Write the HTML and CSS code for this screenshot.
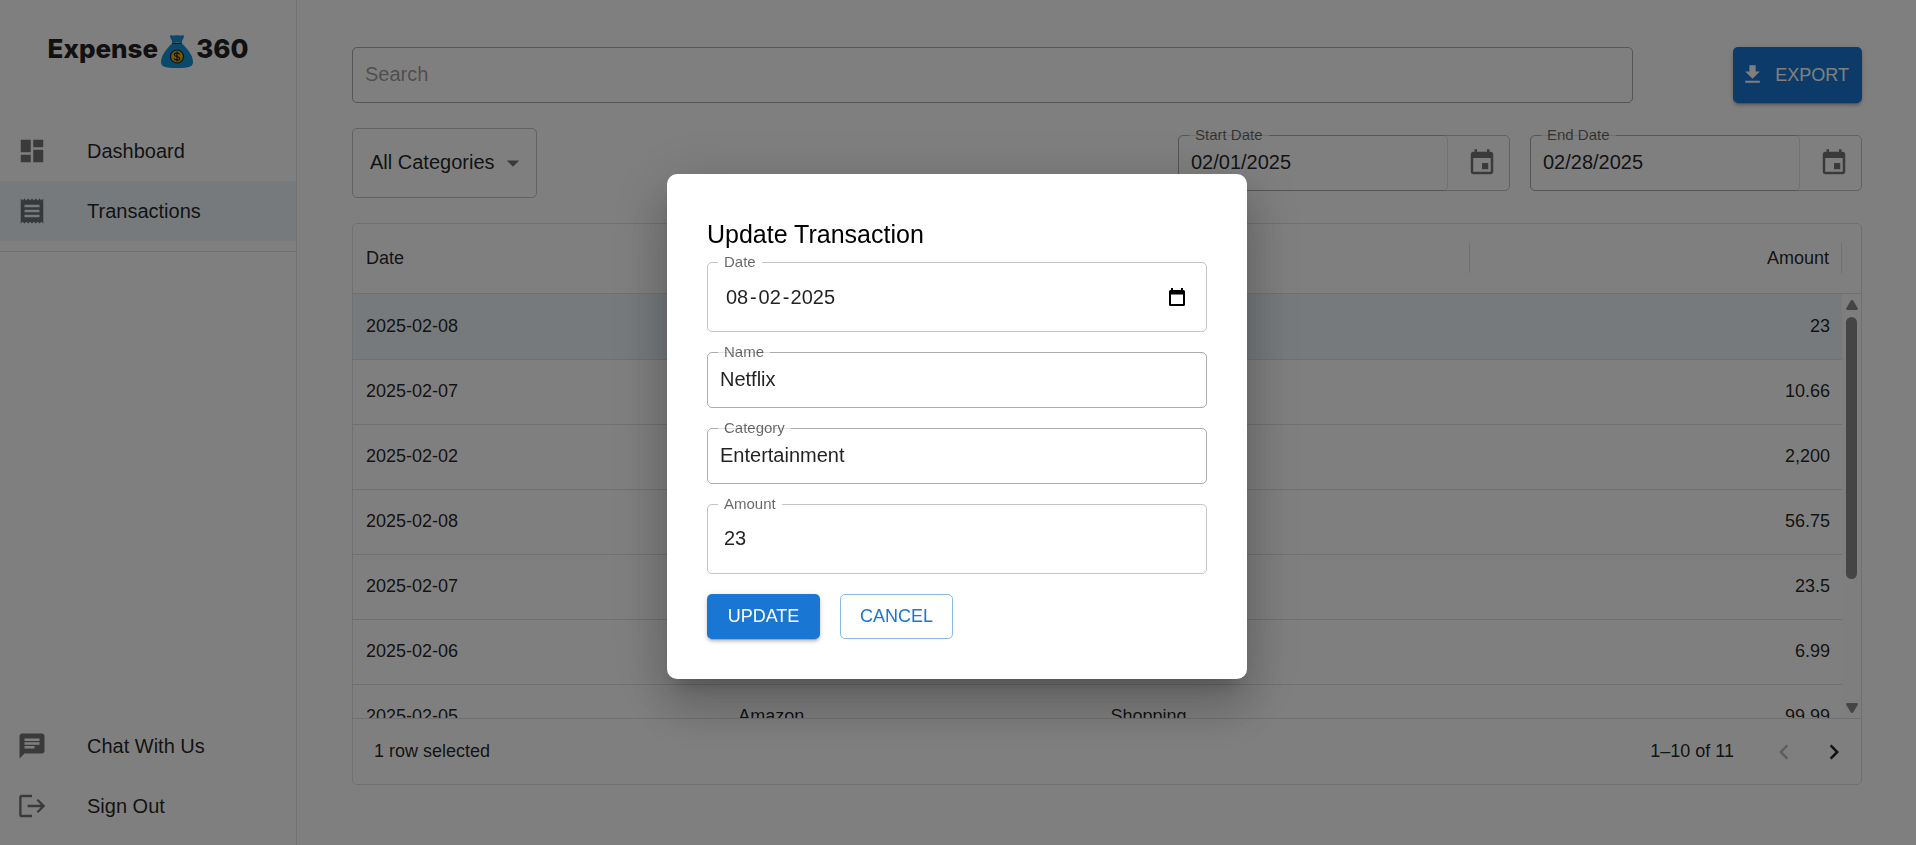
FILE: index.html
```html
<!DOCTYPE html>
<html lang="en">
<head>
<meta charset="utf-8">
<title>Expense360 - Transactions</title>
<link rel="stylesheet" href="styles.css">
</head>
<body>
<div class="app">
  <aside class="sidebar">
    <div class="logo">
      <span>Expense</span>
      <svg class="logo-bag" viewBox="0 0 32 33" aria-hidden="true">
        <path d="M9 1.2C9 .2 10.300 0 11.500.4c1.500.5 2.500-.2 4.500-.2s3 .7 4.500.2C21.800 0 23.200.2 23 1.400c-.4 2.300-2.200 3.600-2.200 6.100h-9.600C11.200 5 9.200 3.600 9 1.200z" fill="#1193d8"/>
        <path d="M11 8.500h10c4.500 4.500 11 11.500 11 18.500 0 4.500-3.500 6-16 6S0 31.500 0 27C0 20 6.500 13 11 8.500z" fill="#1193d8"/>
        <path d="M11 8q5 1 10 0" fill="none" stroke="#222" stroke-width="1.200"/>
        <circle cx="16" cy="21.500" r="6.500" fill="#e5b100" stroke="#222" stroke-width="1.200"/>
        <path d="M18.600 19.500c-.4-1.200-1.500-1.600-2.600-1.600-1.500 0-2.600.7-2.600 1.800 0 2.600 5.300 1.100 5.300 3.700 0 1.200-1.200 1.800-2.700 1.800-1.400 0-2.500-.6-2.800-1.800M16 16.500v10" fill="none" stroke="#222" stroke-width="1.200"/>
      </svg>
      <span>360</span>
    </div>
    <nav class="nav">
      <a class="nav-item" href="#">
        <svg class="icon" viewBox="0 0 24 24"><path d="M3 13h8V3H3v10zm0 8h8v-6H3v6zm10 0h8V11h-8v10zm0-18v6h8V3h-8z"/></svg>
        <span>Dashboard</span>
      </a>
      <a class="nav-item selected" href="#">
        <svg class="icon" viewBox="0 0 24 24"><path d="M18 17H6v-2h12v2zm0-4H6v-2h12v2zm0-4H6V7h12v2zM3 22l1.500-1.500L6 22l1.500-1.500L9 22l1.500-1.500L12 22l1.500-1.500L15 22l1.500-1.500L18 22l1.500-1.500L21 22V2l-1.500 1.500L18 2l-1.500 1.500L15 2l-1.500 1.500L12 2l-1.500 1.500L9 2 7.500 3.500 6 2 4.500 3.500 3 2v20z"/></svg>
        <span>Transactions</span>
      </a>
    </nav>
    <nav class="nav nav-bottom">
      <a class="nav-item" href="#">
        <svg class="icon" viewBox="0 0 24 24"><path d="M20 2H4c-1.100 0-1.990.9-1.990 2L2 22l4-4h14c1.100 0 2-.9 2-2V4c0-1.100-.9-2-2-2zM6 9h12v2H6V9zm8 5H6v-2h8v2zm4-6H6V6h12v2z"/></svg>
        <span>Chat With Us</span>
      </a>
      <a class="nav-item" href="#">
        <svg class="icon" viewBox="0 0 24 24"><path d="M12 4H3.800Q2.700 4 2.700 5.100v13.800q0 1.100 1.100 1.100H12M8.500 12H21M16.300 7l5 5-5 5" fill="none" stroke="currentColor" stroke-width="1.900"/></svg>
        <span>Sign Out</span>
      </a>
    </nav>
  </aside>

  <main class="main">
    <div class="toolbar">
      <div class="field search">
        <input class="input boxed" type="text" placeholder="Search" aria-label="Search">
        <div class="outline plain"></div>
      </div>
      <button class="btn btn-primary btn-export" type="button">
        <svg viewBox="0 0 24 24"><path d="M5 20h14v-2H5v2zM19 9h-4V3H9v6H5l7 7 7-7z"/></svg>
        EXPORT
      </button>
    </div>

    <div class="filters">
      <div class="select-wrap">
        <select class="select" aria-label="Category filter"><option>All Categories</option></select>
        <svg class="select-arrow" viewBox="0 0 24 24"><path d="m7 10 5 5 5-5z"/></svg>
      </div>
      <div class="dates">
        <div class="field date-field">
          <input class="input boxed" id="start" type="text" value="02/01/2025">
          <button class="picker" type="button" aria-label="Choose start date">
            <svg class="icon" viewBox="0 0 24 24"><path d="M17 12h-5v5h5v-5zM16 1v2H8V1H6v2H5c-1.110 0-1.990.9-1.990 2L3 19c0 1.100.89 2 2 2h14c1.100 0 2-.9 2-2V5c0-1.100-.9-2-2-2h-1V1h-2zm3 18H5V8h14v11z"/></svg>
          </button>
          <fieldset class="outline"><legend><label for="start">Start Date</label></legend></fieldset>
        </div>
        <div class="field date-field">
          <input class="input boxed" id="end" type="text" value="02/28/2025">
          <button class="picker" type="button" aria-label="Choose end date">
            <svg class="icon" viewBox="0 0 24 24"><path d="M17 12h-5v5h5v-5zM16 1v2H8V1H6v2H5c-1.110 0-1.990.9-1.990 2L3 19c0 1.100.89 2 2 2h14c1.100 0 2-.9 2-2V5c0-1.100-.9-2-2-2h-1V1h-2zm3 18H5V8h14v11z"/></svg>
          </button>
          <fieldset class="outline"><legend><label for="end">End Date</label></legend></fieldset>
        </div>
      </div>
    </div>

    <section class="grid">
      <div class="grid-body">
        <div class="grid-view">
          <table class="table">
            <thead>
              <tr><th><div>Date</div></th><th><div>Name</div></th><th><div>Category</div></th><th class="num"><div>Amount</div></th></tr>
            </thead>
            <tbody>
              <tr class="selected"><td>2025-02-08</td><td></td><td></td><td class="num">23</td></tr>
              <tr><td>2025-02-07</td><td></td><td></td><td class="num">10.66</td></tr>
              <tr><td>2025-02-02</td><td></td><td></td><td class="num">2,200</td></tr>
              <tr><td>2025-02-08</td><td></td><td></td><td class="num">56.75</td></tr>
              <tr><td>2025-02-07</td><td></td><td></td><td class="num">23.5</td></tr>
              <tr><td>2025-02-06</td><td></td><td></td><td class="num">6.99</td></tr>
              <tr><td>2025-02-05</td><td>Amazon</td><td>Shopping</td><td class="num">99.99</td></tr>
            </tbody>
          </table>
        </div>
        <div class="scroll-col">
          <div class="scroll-head"></div>
          <div class="scrollbar">
            <svg class="scroll-arrow" viewBox="0 0 12 10"><path d="M6 0q.8 0 1.300.8L11.700 8q.6 2-1 2H1.300q-1.600 0-1-2L4.700.8Q5.200 0 6 0z"/></svg>
            <div class="scroll-track"><div class="scroll-thumb"></div></div>
            <svg class="scroll-arrow" viewBox="0 0 12 10"><path d="M6 10q.8 0 1.300-.8L11.700 2q.6-2-1-2H1.300q-1.600 0-1 2l4.400 7.200Q5.200 10 6 10z"/></svg>
          </div>
        </div>
      </div>
      <footer class="grid-footer">
        <span class="row-count">1 row selected</span>
        <span>1–10 of 11</span>
        <div class="pager">
          <button type="button" disabled aria-label="Previous page"><svg class="icon" viewBox="0 0 24 24"><path d="M15.410 7.410 14 6l-6 6 6 6 1.410-1.410L10.830 12z"/></svg></button>
          <button type="button" aria-label="Next page"><svg class="icon" viewBox="0 0 24 24"><path d="M8.590 16.590 10 18l6-6-6-6-1.410 1.410L13.170 12z"/></svg></button>
        </div>
      </footer>
    </section>
  </main>
</div>

<div class="backdrop">
  <form class="modal" role="dialog" aria-labelledby="modal-title">
    <h2 class="modal-title" id="modal-title">Update Transaction</h2>
    <div class="field tall">
      <div class="date-parts">
        <input id="day" type="text" value="08"><span>-</span><input type="text" value="02" aria-label="Month"><span>-</span><input class="year" type="text" value="2025" aria-label="Year">
      </div>
      <button class="native-picker" type="button" aria-label="Show date picker">
        <svg viewBox="0 0 16 18"><path d="M2 0h2v2h8V0h2v2h.5Q16 2 16 3.500v13q0 1.500-1.500 1.500h-13Q0 18 0 16.500v-13Q0 2 1.500 2H2zM2 6.500V16h12V6.500z"/></svg>
      </button>
      <fieldset class="outline"><legend><label for="day">Date</label></legend></fieldset>
    </div>
    <div class="field">
      <input class="input boxed" id="name" type="text" value="Netflix">
      <fieldset class="outline"><legend><label for="name">Name</label></legend></fieldset>
    </div>
    <div class="field">
      <input class="input boxed" id="category" type="text" value="Entertainment">
      <fieldset class="outline"><legend><label for="category">Category</label></legend></fieldset>
    </div>
    <div class="field tall">
      <input class="input" id="amount" type="text" value="23">
      <fieldset class="outline"><legend><label for="amount">Amount</label></legend></fieldset>
    </div>
    <div class="actions">
      <button class="btn btn-primary" type="submit">UPDATE</button>
      <button class="btn btn-outlined" type="button">CANCEL</button>
    </div>
  </form>
</div>
</body>
</html>
```
FILE: styles.css
```css
* {
  box-sizing: border-box;
}

body {
  margin: 0;
  background: #fff;
  color: rgba(0, 0, 0, 0.87);
  font-family: "Liberation Sans", Arial, sans-serif;
  font-size: 20px;
  line-height: 30px;
}

button,
input,
select {
  margin: 0;
  padding: 0;
  border: 0;
  background: none;
  color: inherit;
  font: inherit;
}

svg {
  display: block;
  flex: none;
  fill: currentColor;
}

.icon {
  width: 30px;
  height: 30px;
}

.app {
  display: flex;
  height: 100vh;
  overflow: hidden;
}

/* Sidebar */

.sidebar {
  display: flex;
  flex: none;
  flex-direction: column;
  width: 297px;
  border-right: 1px solid #e0e0e0;
}

.logo {
  display: flex;
  align-items: center;
  justify-content: center;
  gap: 3px;
  height: 121px;
  padding-bottom: 18px;
  color: #222;
  font-family: Inter, "Liberation Sans", sans-serif;
  font-size: 26px;
  font-weight: 800;
}

.logo span {
  padding-bottom: 6px;
}

.logo-bag {
  width: 32px;
  height: 33px;
}

.nav {
  padding-bottom: 10px;
  border-bottom: 1px solid #e0e0e0;
}

.nav-bottom {
  margin-top: auto;
  padding-bottom: 9px;
  border-bottom: 0;
}

.nav-item {
  display: flex;
  align-items: center;
  gap: 40px;
  height: 60px;
  padding-left: 17px;
  color: inherit;
  text-decoration: none;
}

.nav-item .icon {
  color: rgba(0, 0, 0, 0.54);
}

.selected {
  background: rgba(25, 118, 210, 0.08);
}

/* Main column */

.main {
  display: flex;
  flex: 1;
  flex-direction: column;
  gap: 25px;
  min-width: 0;
  padding: 47px 54px 60px 55px;
}

.toolbar {
  display: flex;
  gap: 100px;
}

.search {
  flex: 1;
}

.filters,
.dates {
  display: flex;
  align-items: center;
  gap: 20px;
}

.filters {
  justify-content: space-between;
}

/* Fields */

.field {
  position: relative;
  display: flex;
  align-items: center;
  height: 56px;
}

.tall {
  height: 70px;
  padding: 0 22px 0 17px;
}

.input {
  flex: 1;
  min-width: 0;
  height: 100%;
  padding-bottom: 2px;
  outline: 0;
}

.boxed {
  padding: 0 12px 2px;
  border: 1px solid rgba(0, 0, 0, 0.12);
  border-radius: 5px;
}

.input::placeholder {
  color: rgba(0, 0, 0, 0.4);
}

.outline {
  position: absolute;
  inset: -8px 0 0;
  min-width: 0;
  margin: 0;
  padding: 0 10px;
  border: 1px solid rgba(0, 0, 0, 0.23);
  border-radius: 5px;
  pointer-events: none;
}

.plain {
  inset: 0;
}

.outline legend {
  padding: 0 6px 2px;
  color: rgba(0, 0, 0, 0.6);
  font-size: 15px;
  line-height: 15px;
}

.outline label {
  display: block;
}

.date-field {
  width: 332px;
}

.picker {
  display: flex;
  justify-content: center;
  width: 62px;
  padding-left: 6px;
  color: rgba(0, 0, 0, 0.54);
}

.select-wrap {
  position: relative;
}

.select {
  display: block;
  height: 70px;
  padding: 0 41px 2px 17px;
  border: 1px solid rgba(0, 0, 0, 0.23);
  border-radius: 5px;
  appearance: none;
}

.select-arrow {
  position: absolute;
  top: 20px;
  right: 9px;
  width: 30px;
  height: 30px;
  color: rgba(0, 0, 0, 0.54);
  pointer-events: none;
}

/* Buttons */

.btn {
  min-width: 113px;
  height: 45px;
  padding: 0 19px 2px;
  border-radius: 5px;
  font-size: 18px;
}

.btn-primary {
  background: #1976d2;
  box-shadow: 0 4px 1px -3px rgba(0, 0, 0, 0.2), 0 3px 3px 0 rgba(0, 0, 0, 0.14), 0 1px 6px 0 rgba(0, 0, 0, 0.12);
  color: #fff;
}

.btn-outlined {
  border: 1px solid rgba(25, 118, 210, 0.5);
  color: #1976d2;
}

.btn-export {
  display: flex;
  align-items: center;
  gap: 10px;
  height: 56px;
  padding: 0 13px 1px 7px;
}

.btn-export svg {
  width: 25px;
  height: 25px;
}

/* Data grid */

.grid {
  display: flex;
  flex: 1;
  flex-direction: column;
  min-height: 0;
  border: 1px solid #e0e0e0;
  border-radius: 5px;
  font-size: 18px;
}

.grid-body {
  display: flex;
  flex: 1;
  min-height: 0;
}

.grid-view {
  flex: 1;
  overflow: hidden;
}

.table {
  width: 100%;
  border-collapse: separate;
  border-spacing: 0;
  table-layout: fixed;
}

.table th,
.table td {
  border-bottom: 1px solid #e0e0e0;
  text-align: left;
}

.table th {
  height: 70px;
  padding: 0 0 2px;
  font-weight: 400;
}

.table th div {
  padding: 0 12px 0 13px;
  border-right: 1px solid #e0e0e0;
}

.table td {
  height: 65px;
  padding: 0 12px 2px 13px;
}

.table tbody tr:first-child td {
  height: 66px;
}

.table .num {
  text-align: right;
}

.scroll-col {
  display: flex;
  flex-direction: column;
  width: 19px;
}

.scroll-head {
  height: 70px;
  border-bottom: 1px solid #e0e0e0;
}

.scrollbar {
  display: flex;
  flex: 1;
  flex-direction: column;
  align-items: center;
  gap: 7px;
  padding: 6px 0 5px;
  background: #fcfcfc;
}

.scroll-arrow {
  width: 12px;
  height: 10px;
  color: #8b8b8b;
}

.scroll-track {
  flex: 1;
  width: 11px;
}

.scroll-thumb {
  height: 69%;
  border-radius: 6px;
  background: #8b8b8b;
}

.grid-footer {
  display: flex;
  align-items: center;
  height: 66px;
  padding: 0 12px 0 21px;
  border-top: 1px solid #e0e0e0;
}

.grid-footer span {
  padding-bottom: 2px;
}

.row-count {
  margin-right: auto;
}

.pager {
  display: flex;
  gap: 20px;
  margin-left: 35px;
}

.pager button:disabled {
  color: rgba(0, 0, 0, 0.26);
}

/* Dialog */

.backdrop {
  position: fixed;
  inset: 0;
  display: flex;
  align-items: center;
  justify-content: center;
  padding: 8px 2px 0 0;
  background: rgba(0, 0, 0, 0.5);
}

.modal {
  display: flex;
  flex-direction: column;
  gap: 20px;
  width: 580px;
  padding: 40px;
  border-radius: 10px;
  background: #fff;
  box-shadow: 0 14px 19px -9px rgba(0, 0, 0, 0.2), 0 30px 48px 4px rgba(0, 0, 0, 0.14), 0 11px 58px 10px rgba(0, 0, 0, 0.12);
}

.modal-title {
  margin: 3px 0 -9px;
  color: #000;
  font-size: 25px;
  font-weight: 400;
  line-height: 34px;
}

.date-parts {
  display: flex;
  flex: 1;
}

.date-parts input {
  width: 26px;
  text-align: center;
}

.date-parts .year {
  width: 47px;
}

.native-picker {
  color: #000;
}

.native-picker svg {
  width: 16px;
  height: 18px;
}

.actions {
  display: flex;
  gap: 20px;
}
```
